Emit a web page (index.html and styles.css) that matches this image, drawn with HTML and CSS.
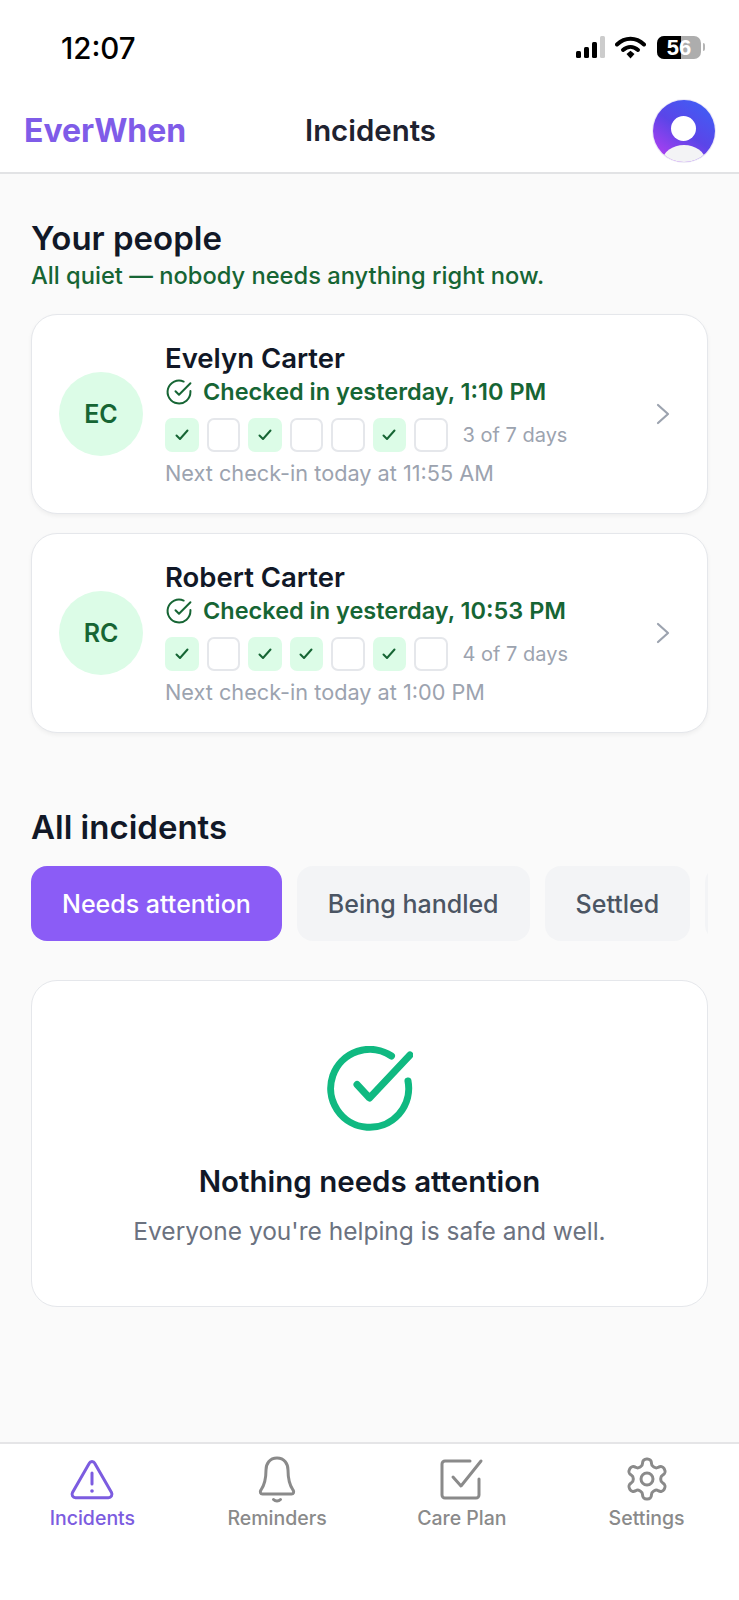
FILE: index.html
```html
<!DOCTYPE html>
<html lang="en">
<head>
<meta charset="utf-8">
<title>EverWhen</title>
<link rel="stylesheet" href="styles.css">
</head>
<body>
<div class="app">
  <header class="top">
    <div class="status">
      <span class="clock">12:07</span>
      <div class="status-icons">
        <svg class="signal" width="32" height="22" viewBox="0 0 32 22"><rect x="0" y="15" width="5" height="7" rx="1.5" fill="#000"/><rect x="8" y="11" width="5" height="11" rx="1.5" fill="#000"/><rect x="16" y="6" width="5" height="16" rx="1.5" fill="#000"/><rect x="24" y="0" width="5" height="22" rx="1.5" fill="#ccc"/></svg>
        <svg class="wifi" width="31" height="23" viewBox="0 0 31 23"><path d="M2 8.500C10 0.800 21 0.800 29 8.500" fill="none" stroke="#000" stroke-width="4" stroke-linecap="round"/><path d="M8 14C12.500 10 18.500 10 23 14" fill="none" stroke="#000" stroke-width="4" stroke-linecap="round"/><path d="M11.500 18L15.500 14.800L19.500 18L15.500 22.500Z" fill="#000"/></svg>
        <div class="battery"><span class="batt-fill"></span><span class="batt-num">56</span></div>
        <span class="batt-tip"></span>
      </div>
    </div>
    <div class="nav">
      <span class="brand">EverWhen</span>
      <span class="nav-title">Incidents</span>
      <div class="avatar"><span class="avatar-head"></span><span class="avatar-body"></span></div>
    </div>
  </header>

  <main class="content">
    <h2 class="title">Your people</h2>
    <p class="quiet">All quiet — nobody needs anything right now.</p>

    <article class="card person">
      <div class="initials">EC</div>
      <div class="info">
        <div class="name">Evelyn Carter</div>
        <div class="checked">
          <svg class="checked-icon" width="28" height="28" viewBox="0 0 24 24"><path d="M21.800 11.100V12a9.800 9.800 0 1 1-5.800-8.950" fill="none" stroke="#166534" stroke-width="1.700" stroke-linecap="round" stroke-linejoin="round"/><path d="M21.800 4.500L12 14.300l-3-3" fill="none" stroke="#166534" stroke-width="1.700" stroke-linecap="round" stroke-linejoin="round"/></svg>
          <span>Checked in yesterday, 1:10 PM</span>
        </div>
        <div class="week">
          <span class="day on"><svg width="16" height="14" viewBox="0 0 16 14"><path d="M2.500 7.500L6 11L13.500 2.500" fill="none" stroke="#166534" stroke-width="2" stroke-linecap="round" stroke-linejoin="round"/></svg></span>
          <span class="day"></span>
          <span class="day on"><svg width="16" height="14" viewBox="0 0 16 14"><path d="M2.500 7.500L6 11L13.500 2.500" fill="none" stroke="#166534" stroke-width="2" stroke-linecap="round" stroke-linejoin="round"/></svg></span>
          <span class="day"></span>
          <span class="day"></span>
          <span class="day on"><svg width="16" height="14" viewBox="0 0 16 14"><path d="M2.500 7.500L6 11L13.500 2.500" fill="none" stroke="#166534" stroke-width="2" stroke-linecap="round" stroke-linejoin="round"/></svg></span>
          <span class="day"></span>
          <span class="count">3 of 7 days</span>
        </div>
        <div class="next">Next check-in today at 11:55 AM</div>
      </div>
      <svg class="chev" width="16" height="24" viewBox="0 0 16 24"><path d="M3 3L13 12L3 21" fill="none" stroke="#9ca3af" stroke-width="2.200" stroke-linecap="round" stroke-linejoin="round"/></svg>
    </article>

    <article class="card person">
      <div class="initials">RC</div>
      <div class="info">
        <div class="name">Robert Carter</div>
        <div class="checked">
          <svg class="checked-icon" width="28" height="28" viewBox="0 0 24 24"><path d="M21.800 11.100V12a9.800 9.800 0 1 1-5.800-8.950" fill="none" stroke="#166534" stroke-width="1.700" stroke-linecap="round" stroke-linejoin="round"/><path d="M21.800 4.500L12 14.300l-3-3" fill="none" stroke="#166534" stroke-width="1.700" stroke-linecap="round" stroke-linejoin="round"/></svg>
          <span>Checked in yesterday, 10:53 PM</span>
        </div>
        <div class="week">
          <span class="day on"><svg width="16" height="14" viewBox="0 0 16 14"><path d="M2.500 7.500L6 11L13.500 2.500" fill="none" stroke="#166534" stroke-width="2" stroke-linecap="round" stroke-linejoin="round"/></svg></span>
          <span class="day"></span>
          <span class="day on"><svg width="16" height="14" viewBox="0 0 16 14"><path d="M2.500 7.500L6 11L13.500 2.500" fill="none" stroke="#166534" stroke-width="2" stroke-linecap="round" stroke-linejoin="round"/></svg></span>
          <span class="day on"><svg width="16" height="14" viewBox="0 0 16 14"><path d="M2.500 7.500L6 11L13.500 2.500" fill="none" stroke="#166534" stroke-width="2" stroke-linecap="round" stroke-linejoin="round"/></svg></span>
          <span class="day"></span>
          <span class="day on"><svg width="16" height="14" viewBox="0 0 16 14"><path d="M2.500 7.500L6 11L13.500 2.500" fill="none" stroke="#166534" stroke-width="2" stroke-linecap="round" stroke-linejoin="round"/></svg></span>
          <span class="day"></span>
          <span class="count">4 of 7 days</span>
        </div>
        <div class="next">Next check-in today at 1:00 PM</div>
      </div>
      <svg class="chev" width="16" height="24" viewBox="0 0 16 24"><path d="M3 3L13 12L3 21" fill="none" stroke="#9ca3af" stroke-width="2.200" stroke-linecap="round" stroke-linejoin="round"/></svg>
    </article>

    <h2 class="title incidents-title">All incidents</h2>
    <div class="tabs">
      <span class="tab active">Needs attention</span>
      <span class="tab">Being handled</span>
      <span class="tab">Settled</span>
      <span class="tab clipped"></span>
    </div>

    <section class="card empty">
      <svg class="empty-icon" width="86" height="86" viewBox="0 0 86 86"><path d="M81 35A39 39 0 1 1 64.500 10" fill="none" stroke="#10b981" stroke-width="7" stroke-linecap="round" stroke-linejoin="round"/><path d="M83 9L42.500 52L30 38.500" fill="none" stroke="#10b981" stroke-width="7" stroke-linecap="round" stroke-linejoin="round"/></svg>
      <h3 class="empty-title">Nothing needs attention</h3>
      <p class="empty-text">Everyone you're helping is safe and well.</p>
    </section>
  </main>

  <nav class="tabbar">
    <div class="tb-item active">
      <svg width="48" height="48" viewBox="0 0 48 48"><path d="M24 6.500a3 3 0 0 0-2.700 1.700L4.500 37.500a3.500 3.500 0 0 0 3 5.200h33a3.500 3.500 0 0 0 3-5.200L26.700 8.200A3 3 0 0 0 24 6.500Z" fill="none" stroke="#7c5ce0" stroke-width="3" stroke-linejoin="round"/><path d="M24 18V29" stroke="#7c5ce0" stroke-width="3" stroke-linecap="round"/><circle cx="24" cy="36" r="1.800" fill="#7c5ce0"/></svg>
      <span>Incidents</span>
    </div>
    <div class="tb-item">
      <svg width="48" height="48" viewBox="0 0 48 48"><path d="M24 3c-7.500 0-11 6-11 12 0 9-1.500 15-5 20-1.500 2-.5 4 1.500 4h29c2 0 3-2 1.500-4-3.500-5-5-11-5-20 0-6-3.500-12-11-12Z" fill="none" stroke="#8a8a8a" stroke-width="3" stroke-linejoin="round"/><path d="M20.500 44.500c2 2 5 2 7 0" fill="none" stroke="#8a8a8a" stroke-width="3" stroke-linecap="round"/></svg>
      <span>Reminders</span>
    </div>
    <div class="tb-item">
      <svg width="48" height="48" viewBox="0 0 48 48"><path d="M41 24V40a3 3 0 0 1-3 3H7a3 3 0 0 1-3-3V9a3 3 0 0 1 3-3H32" fill="none" stroke="#8a8a8a" stroke-width="3" stroke-linecap="round" stroke-linejoin="round"/><path d="M15 22L23 31L43 6" fill="none" stroke="#8a8a8a" stroke-width="3" stroke-linecap="round" stroke-linejoin="round"/></svg>
      <span>Care Plan</span>
    </div>
    <div class="tb-item">
      <svg width="48" height="48" viewBox="0 0 24 24"><path d="M12.220 2h-.440a2 2 0 0 0-2 2v.180a2 2 0 0 1-1 1.730l-.430.250a2 2 0 0 1-2 0l-.150-.080a2 2 0 0 0-2.730.730l-.220.380a2 2 0 0 0 .730 2.730l.150.100a2 2 0 0 1 1 1.720v.510a2 2 0 0 1-1 1.740l-.150.090a2 2 0 0 0-.730 2.730l.220.380a2 2 0 0 0 2.730.730l.150-.080a2 2 0 0 1 2 0l.430.250a2 2 0 0 1 1 1.730V20a2 2 0 0 0 2 2h.440a2 2 0 0 0 2-2v-.180a2 2 0 0 1 1-1.730l.430-.250a2 2 0 0 1 2 0l.150.080a2 2 0 0 0 2.730-.730l.220-.390a2 2 0 0 0-.730-2.730l-.150-.080a2 2 0 0 1-1-1.740v-.500a2 2 0 0 1 1-1.740l.150-.090a2 2 0 0 0 .730-2.730l-.220-.380a2 2 0 0 0-2.730-.730l-.150.080a2 2 0 0 1-2 0l-.430-.250a2 2 0 0 1-1-1.730V4a2 2 0 0 0-2-2Z" fill="none" stroke="#8a8a8a" stroke-width="1.500" stroke-linejoin="round"/><circle cx="12" cy="12" r="3" fill="none" stroke="#8a8a8a" stroke-width="1.500"/></svg>
      <span>Settings</span>
    </div>
  </nav>
</div>
</body>
</html>
```
FILE: styles.css
```css
* { box-sizing: border-box; }
html, body { margin: 0; padding: 0; }
body { font-family: Inter, "Liberation Sans", sans-serif; background: #fff; }
.app { width: 739px; height: 1600px; display: flex; flex-direction: column; overflow: hidden; background: #fafafa; }

.top { height: 174px; background: #fff; border-bottom: 2px solid #e2e3e5; flex: none; }
.status { height: 90px; display: flex; align-items: flex-start; justify-content: space-between; padding: 29px 34px 0 61px; }
.clock { font-size: 29.500px; line-height: 38px; font-weight: 500; color: #000; }
.status-icons { display: flex; align-items: center; height: 36px; }
.signal { margin-right: 7px; }
.wifi { margin-right: 11px; }
.battery { position: relative; width: 44px; height: 23px; border-radius: 7px; background: #adadad; overflow: hidden; display: flex; align-items: center; justify-content: center; }
.batt-fill { position: absolute; left: 0; top: 0; bottom: 0; width: 24px; background: #000; }
.batt-num { position: relative; color: #fff; font-size: 22px; line-height: 23px; font-weight: 600; font-family: "Liberation Sans", sans-serif; }
.batt-tip { width: 2px; height: 8px; margin-left: 2px; background: #b5b5b5; border-radius: 0 2px 2px 0; }

.nav { height: 82px; position: relative; display: flex; align-items: center; padding: 0 24px; }
.brand { font-size: 32px; line-height: 40px; font-weight: 700; color: #7f5ce8; width: 281px; }
.nav-title { font-size: 29.400px; line-height: 36px; font-weight: 600; color: #1f2230; flex: 1; }
.avatar { width: 62px; height: 62px; border-radius: 50%; background: linear-gradient(35deg, #a83ff0 12%, #5b45e8 50%, #3f5ef5 92%); position: relative; overflow: hidden; box-shadow: 0 0 0 1px #ece9f6; }
.avatar-head { position: absolute; left: 18px; top: 16px; width: 25px; height: 25px; border-radius: 50%; background: #fff; }
.avatar-body { position: absolute; left: 10px; top: 45px; width: 42px; height: 30px; border-radius: 50%; background: #f3f3f5; }

.content { flex: 1; padding: 44px 31px 0; min-height: 0; }
.title { margin: 0; font-size: 33px; line-height: 40px; font-weight: 600; color: #111827; }
.quiet { margin: 4px 0 24px; font-size: 23.700px; line-height: 28px; font-weight: 500; color: #166534; }

.card { background: #fff; border: 1.500px solid #e5e7eb; border-radius: 26px; }
.person { height: 200px; margin-bottom: 19px; display: flex; align-items: center; padding: 0 36px 0 27px; box-shadow: 0 2px 4px rgba(0,0,0,.05); }
.initials { width: 84px; height: 84px; flex: none; border-radius: 50%; background: #dcfce7; color: #166534; font-size: 25px; font-weight: 600; display: flex; align-items: center; justify-content: center; margin-right: 22px; }
.info { flex: 1; min-width: 0; }
.name { font-size: 27.500px; line-height: 32px; font-weight: 600; color: #111827; }
.checked { display: flex; align-items: center; gap: 10px; margin-top: 3px; font-size: 23.500px; line-height: 30px; font-weight: 600; color: #166534; }
.week { display: flex; align-items: center; gap: 8px; margin-top: 11px; }
.day { width: 33.500px; height: 33.500px; border-radius: 7px; border: 2px solid #e5e7eb; background: #fff; display: flex; align-items: center; justify-content: center; flex: none; }
.day.on { background: #dcfce7; border-color: #dcfce7; }
.count { margin-left: 7px; font-size: 20px; line-height: 34px; color: #9ca3af; }
.next { margin-top: 8px; font-size: 21.700px; line-height: 26px; color: #9ca3af; }
.chev { flex: none; }

.incidents-title { margin-top: 74px; }
.tabs { display: flex; gap: 15px; margin: 19px 0 0; height: 75px; overflow: hidden; }
.tab { display: flex; align-items: center; padding: 0 31px; height: 75px; border-radius: 16px; background: #f3f4f6; color: #4b5563; font-size: 25px; font-weight: 500; flex: none; }
.tab.active { background: #8b5cf6; color: #fff; }
.tab.clipped { width: 120px; }

.empty { margin-top: 39px; height: 327px; display: flex; flex-direction: column; align-items: center; padding-top: 65px; }
.empty-title { margin: 30px 0 0; font-size: 29.500px; line-height: 38px; font-weight: 600; color: #111827; }
.empty-text { margin: 16px 0 0; font-size: 24.500px; line-height: 30px; color: #6b7280; }

.tabbar { height: 158px; flex: none; background: #fff; border-top: 2px solid #e5e5e7; display: flex; padding-top: 11px; }
.tb-item { flex: 1; display: flex; flex-direction: column; align-items: center; color: #8a8a8a; font-size: 19.500px; line-height: 24px; font-weight: 500; }
.tb-item svg { margin-bottom: 3px; }
.tb-item.active { color: #7c5ce0; }
```
